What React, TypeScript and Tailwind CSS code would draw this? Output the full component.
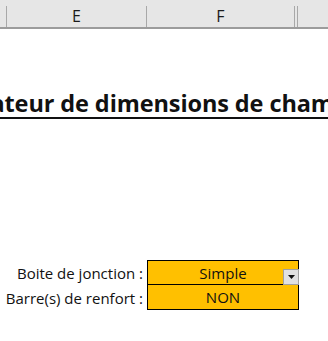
import React from 'react';

const font = { fontFamily: '"Open Sans", "Liberation Sans", sans-serif' };

const App = () => {
  return (
    <div className="w-[328px] h-[341px] bg-white overflow-hidden relative text-[#111]" style={font}>
      {/* column headers */}
      <div className="flex h-[29px] bg-[#e6e6e6] border-b-2 border-[#9c9c9c]">
        <div className="w-[7px] border-r border-[#a8a8a8] mt-[6px]" />
        <div className="w-[140px] flex items-center justify-center text-[16px] text-[#1a1a1a] border-r border-[#a8a8a8] mt-[6px]">
          <span className="-translate-y-[1px]">E</span>
        </div>
        <div className="w-[148px] flex items-center justify-center text-[16px] text-[#1a1a1a] border-r border-[#a8a8a8] mt-[6px]">
          <span className="-translate-y-[1px]">F</span>
        </div>
        <div className="w-[3px] border-r border-[#a8a8a8] mt-[6px]" />
        <div className="flex-1" />
      </div>

      {/* title */}
      <div className="mt-[57px] whitespace-nowrap ml-[-80px]">
        <span className="text-[23.5px] font-bold underline decoration-2 underline-offset-[5px] tracking-[-0.1px]">
          Générateur de dimensions de chambre
        </span>
      </div>

      {/* inputs */}
      <div className="mt-[139px] flex flex-col text-[15px]">
        <div className="flex h-[25px]">
          <div className="w-[147px] pr-[4px] flex items-center justify-end">Boite de jonction :</div>
          <div className="relative w-[152px] bg-[#ffc000] border border-black flex items-center justify-center">
            Simple
            <div className="absolute right-[-1px] bottom-[-1px] w-[16px] h-[16px] bg-[#e1e1e1] border border-[#a0a0a0] flex items-center justify-center">
              <svg width="7" height="4" viewBox="0 0 7 4">
                <path d="M0 0h7L3.5 4z" fill="#111" />
              </svg>
            </div>
          </div>
        </div>
        <div className="flex h-[25px]">
          <div className="w-[147px] pr-[4px] flex items-center justify-end">Barre(s) de renfort :</div>
          <div className="w-[152px] bg-[#ffc000] border border-t-0 border-black flex items-center justify-center">
            NON
          </div>
        </div>
      </div>
    </div>
  );
};

export default App;
